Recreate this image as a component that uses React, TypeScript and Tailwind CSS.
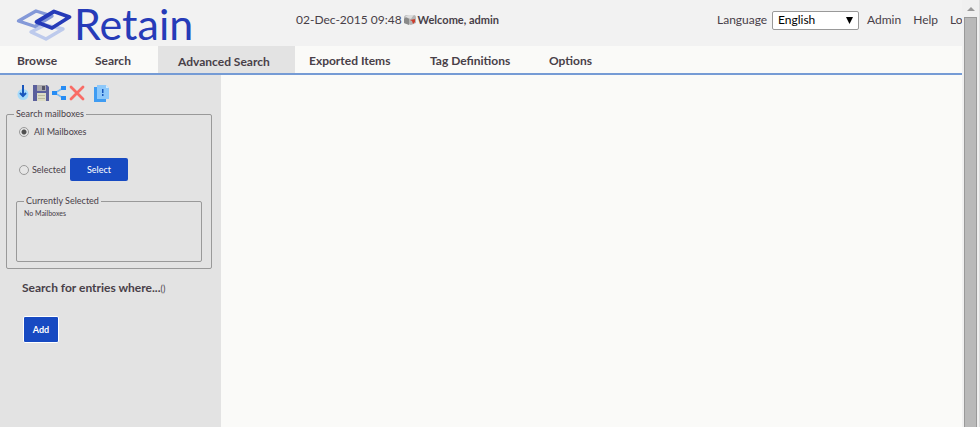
import { useState } from "react";

const radio =
  "m-0 size-[10px] shrink-0 appearance-none rounded-full border border-[#999] bg-[#e6e6e6] checked:bg-[radial-gradient(circle,#505050_0_2px,#e6e6e6_3px)]";

function LogoMark() {
  return (
    <svg viewBox="0 0 56 34" className="h-[34px] w-14" fill="none" strokeLinejoin="round" aria-hidden="true">
      <path d="M15 25L29 18L47 22L30 32Z" stroke="#bdcaec" strokeWidth="3.400" />
      <path d="M2.500 14L20 4L36 9L19 19.500Z" stroke="#8499d8" strokeWidth="3.400" />
      <path d="M20.500 15L38 4.500L53.500 10L36 21Z" stroke="#263bb8" strokeWidth="3.800" />
    </svg>
  );
}

function MailboxIcon() {
  return (
    <svg viewBox="0 0 14 12" className="h-3 w-[14px]" aria-hidden="true">
      <path d="M1 4Q1 1 4 1H11Q13 1 13 4V9L8 11L1 9Z" fill="#b5b5b5" />
      <path d="M2 3Q3 1 6 1H11Q9 3 8 5Z" fill="#ddd" />
      <path d="M1 5Q3 2 6 5V11L1 9Z" fill="#8a8a8a" />
      <path d="M7 6L12 5V8L10 10L9 7Z" fill="#ce3d2c" />
    </svg>
  );
}

function DownIcon() {
  return (
    <svg viewBox="0 0 14 17" className="h-[17px] w-[14px]" aria-hidden="true">
      <circle cx="7" cy="10.500" r="5.500" fill="#a5dafa" />
      <path d="M7 1V12M4 9L7 12L10 9" fill="none" stroke="#1856bd" strokeWidth="2" />
    </svg>
  );
}

function SaveIcon() {
  return (
    <svg viewBox="0 0 16 16" className="size-4" aria-hidden="true">
      <path d="M0 0H14L16 2V16H0Z" fill="#5b609c" />
      <path d="M4 0H13V6H4Z" fill="#aaa9ad" />
      <path d="M9 1H12V5H9Z" fill="#555568" />
      <path d="M4 8H13V16H4Z" fill="#dcdcc5" />
      <path d="M5 10.500H12M5 13.500H12" stroke="#bbb99f" />
    </svg>
  );
}

function ShareIcon() {
  return (
    <svg viewBox="0 0 14 14" className="size-[14px]" aria-hidden="true">
      <path d="M11 2L3 7L11 12" fill="none" stroke="#7bbcf4" strokeWidth="1.500" />
      <path d="M0 5H5V9H0ZM9 0H14V4H9ZM9 10H14V14H9Z" fill="#268cf4" />
    </svg>
  );
}

function DeleteIcon() {
  return (
    <svg viewBox="0 0 16 16" className="size-4" aria-hidden="true">
      <path d="M2 2L14 14M14 2L2 14" stroke="#f96c66" strokeWidth="2.800" strokeLinecap="round" />
    </svg>
  );
}

function ReportIcon() {
  return (
    <svg viewBox="0 0 16 18" className="h-[18px] w-4" aria-hidden="true">
      <path d="M0 3H4V15H12V18H0Z" fill="#3f9cf2" />
      <path d="M3 1H12L15 4V15H3Z" fill="#8dc8fa" />
      <path d="M12 1V4H15Z" fill="#d3ebff" />
      <path d="M8 5H9.500V9H8ZM8 10H9.500V12H8Z" fill="#1856bd" />
    </svg>
  );
}

export default function App() {
  const [scope, setScope] = useState("all");

  return (
    <div className="flex h-screen overflow-hidden bg-[#fafaf8] font-['Lato',sans-serif] text-[#484048]">
      <div className="flex min-w-0 flex-1 flex-col overflow-hidden">
        <header className="flex h-[46px] shrink-0 items-start bg-[#f2f2f2] text-xs leading-5 whitespace-nowrap">
          <div className="flex w-[296px] shrink-0 pt-[7px] pl-4">
            <LogoMark />
            <span className="pl-0.5 text-[43px] leading-[34px] text-[#263bb8]">Retain</span>
          </div>
          <div className="flex items-center pt-[10px]">
            <span>02-Dec-2015 09:48</span>
            <span className="px-px"><MailboxIcon /></span>
            <span className="text-[11px] font-bold">Welcome, admin</span>
          </div>
          <div className="ml-auto flex w-[245px] shrink-0 items-center pt-[10px]">
            <label htmlFor="language" className="w-[55px] shrink-0">Language</label>
            <span className="relative h-[19px] w-[87px] shrink-0">
              <select id="language" className="block h-[19px] w-full appearance-none rounded-[2px] border border-[#999] bg-white pl-[5px] text-xs leading-4 text-black">
                <option>English</option>
              </select>
              <svg viewBox="0 0 7 7" className="pointer-events-none absolute top-[6px] right-[6px] size-[7px]" aria-hidden="true">
                <path d="M0 0H7L3.500 7Z" fill="#000" />
              </svg>
            </span>
            <nav className="flex gap-3 pl-2">
              <a href="#admin">Admin</a>
              <a href="#help">Help</a>
              <a href="#logout">Logout</a>
            </nav>
          </div>
        </header>
        <nav className="flex h-[29px] shrink-0 border-b-2 border-[#759bd5] text-xs leading-[29px] font-bold whitespace-nowrap">
          <a href="#browse" className="w-[78px] pl-[17px]">Browse</a>
          <a href="#search" className="w-20 pl-[17px]">Search</a>
          <a href="#advanced" aria-current="page" className="w-[137px] bg-[#e3e3e3] pl-5 leading-8">Advanced Search</a>
          <a href="#exported" className="w-[121px] pl-[14px]">Exported Items</a>
          <a href="#tags" className="w-[119px] pl-[14px]">Tag Definitions</a>
          <a href="#options" className="pl-[14px]">Options</a>
        </nav>
        <div className="flex min-h-0 flex-1">
          <aside className="w-[221px] shrink-0 bg-[#e3e3e3]">
            <div className="flex h-[33px] items-center gap-[3px] pt-0.5 pl-4">
              <button aria-label="Run search"><DownIcon /></button>
              <button aria-label="Save"><SaveIcon /></button>
              <button aria-label="Share"><ShareIcon /></button>
              <button aria-label="Delete"><DeleteIcon /></button>
              <button aria-label="Report" className="pl-1.5"><ReportIcon /></button>
            </div>
            <fieldset className="mr-[9px] ml-1.5 h-[161px] rounded-[2px] border border-[#999] px-[9px] text-[9px] leading-3">
              <legend className="ml-[-2px] px-0.5">Search mailboxes</legend>
              <label className="mt-1.5 flex h-3 items-center gap-[5px] pl-[3px]">
                <input type="radio" name="scope" className={radio} checked={scope === "all"} onChange={() => setScope("all")} />
                All Mailboxes
              </label>
              <div className="mt-5 flex items-center pl-[3px]">
                <label className="flex w-[51px] items-center gap-[3px]">
                  <input type="radio" name="scope" className={radio} checked={scope === "selected"} onChange={() => setScope("selected")} />
                  Selected
                </label>
                <button className="h-[23px] w-[58px] rounded-[2px] bg-[#174ac2] text-white">Select</button>
              </div>
              <fieldset className="mt-[14px] h-[67px] rounded-[2px] border border-[#999] px-[7px]">
                <legend className="px-0.5">Currently Selected</legend>
                <p className="text-[7px] leading-3">No Mailboxes</p>
              </fieldset>
            </fieldset>
            <h2 className="mt-[11px] pl-[22px] text-xs leading-4 font-bold">
              Search for entries where...<span className="text-[9px] font-normal">()</span>
            </h2>
            <button className="mt-[19px] ml-[23px] h-[27px] w-9 rounded-[2px] border border-white bg-[#174ac2] text-[9px] font-bold text-white">Add</button>
          </aside>
          <main className="flex-1" />
        </div>
      </div>
      <div className="flex w-[18px] shrink-0 flex-col border-r border-[#ddd] bg-[#f0f0f0] px-0.5" aria-hidden="true">
        <div className="flex h-[17px] items-center justify-center">
          <svg viewBox="0 0 8 4" className="h-1 w-2"><path d="M0 4L4 0L8 4Z" fill="#999" /></svg>
        </div>
        <div className="flex-1 border border-b-0 border-[#999] bg-[#b9b9b9]" />
      </div>
    </div>
  );
}
